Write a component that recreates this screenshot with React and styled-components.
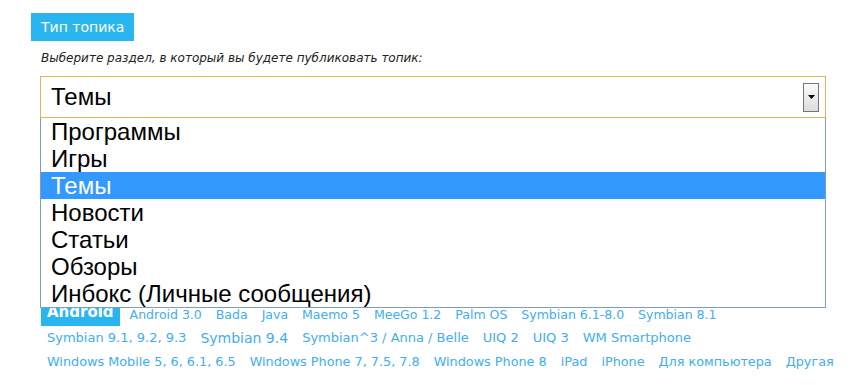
import styled, { createGlobalStyle } from "styled-components";

const GlobalStyle = createGlobalStyle`
  body {
    margin: 0;
    background: #fff;
    font-family: "DejaVu Sans", Verdana, sans-serif;
  }
`;

const Page = styled.div`
  padding: 13px 0 0 31px;
`;

const Tab = styled.div`
  display: inline-block;
  height: 28px;
  line-height: 28px;
  padding: 0 10px;
  background: #29b6f0;
  color: #fff;
  font-size: 14px;
`;

const Hint = styled.p`
  margin: 10px 0 0 10px;
  font-size: 12px;
  font-style: italic;
  color: #222;
  line-height: 15px;
`;

const Field = styled.div`
  position: relative;
  width: 786px;
  margin: 10px 0 0 9px;
`;

const SelectBox = styled.div`
  display: flex;
  align-items: center;
  justify-content: space-between;
  height: 40px;
  padding: 0 6px 0 10px;
  border: 1px solid #e3b45a;
  font-family: "Liberation Sans", Arial, sans-serif;
  font-size: 24px;
  color: #000;
`;

const Arrow = styled.span`
  display: flex;
  align-items: center;
  justify-content: center;
  width: 14px;
  height: 27px;
  border: 1px solid #757575;
  background: linear-gradient(#fafafa, #dcdcdc);
  svg {
    width: 7px;
    height: 4px;
  }
`;

const Dropdown = styled.ul`
  position: absolute;
  top: 100%;
  left: 0;
  right: 0;
  margin: 0;
  padding: 0;
  list-style: none;
  background: #fff;
  border: 1px solid #7f9db9;
  border-top: none;
  z-index: 2;
`;

const Option = styled.li`
  height: 27px;
  line-height: 27px;
  padding-left: 10px;
  font-family: "Liberation Sans", Arial, sans-serif;
  font-size: 24px;
  color: ${({ $active }) => ($active ? "#fff" : "#000")};
  background: ${({ $active }) => ($active ? "#3399ff" : "transparent")};
`;

const Tags = styled.div`
  margin: 181px 0 0 10px;
  display: flex;
  flex-direction: column;
`;

const TagRow = styled.div`
  display: flex;
  align-items: center;
  gap: 2px;
  height: 24px;
  &:first-child {
    height: 27px;
    align-items: flex-end;
  }
`;

const Tag = styled.a`
  padding: 0 6px;
  font-size: ${({ $size }) => $size}px;
  color: #40aef2;
  text-decoration: none;
  white-space: nowrap;
  line-height: 22px;
`;

const ActiveTag = styled(Tag)`
  background: #29b6f0;
  color: #fff;
  font-weight: bold;
  font-size: 15px;
  line-height: 27px;
  margin-right: 2px;
`;

const options = [
  "Программы",
  "Игры",
  "Темы",
  "Новости",
  "Статьи",
  "Обзоры",
  "Инбокс (Личные сообщения)",
];

const rows = [
  [
    ["Android 3.0", 12.5],
    ["Bada", 12.5],
    ["Java", 12.5],
    ["Maemo 5", 12.5],
    ["MeeGo 1.2", 12.5],
    ["Palm OS", 12.5],
    ["Symbian 6.1-8.0", 12.5],
    ["Symbian 8.1", 12.5],
  ],
  [
    ["Symbian 9.1, 9.2, 9.3", 13],
    ["Symbian 9.4", 14],
    ["Symbian^3 / Anna / Belle", 13],
    ["UIQ 2", 13],
    ["UIQ 3", 13],
    ["WM Smartphone", 13],
  ],
  [
    ["Windows Mobile 5, 6, 6.1, 6.5", 12.8],
    ["Windows Phone 7, 7.5, 7.8", 12.8],
    ["Windows Phone 8", 12.8],
    ["iPad", 12.8],
    ["iPhone", 12.8],
    ["Для компьютера", 12.8],
    ["Другая", 12.8],
  ],
];

export default function App() {
  return (
    <>
      <GlobalStyle />
      <Page>
        <Tab>Тип топика</Tab>
        <Hint>Выберите раздел, в который вы будете публиковать топик:</Hint>
        <Field>
          <SelectBox>
            Темы
            <Arrow>
              <svg viewBox="0 0 7 4">
                <path d="M0 0h7L3.5 4z" fill="#000" />
              </svg>
            </Arrow>
          </SelectBox>
          <Dropdown>
            {options.map((o) => (
              <Option key={o} $active={o === "Темы"}>
                {o}
              </Option>
            ))}
          </Dropdown>
        </Field>
        <Tags>
          {rows.map((row, i) => (
            <TagRow key={i}>
              {i === 0 && <ActiveTag href="#">Android</ActiveTag>}
              {row.map(([name, size]) => (
                <Tag key={name} href="#" $size={size}>
                  {name}
                </Tag>
              ))}
            </TagRow>
          ))}
        </Tags>
      </Page>
    </>
  );
}
